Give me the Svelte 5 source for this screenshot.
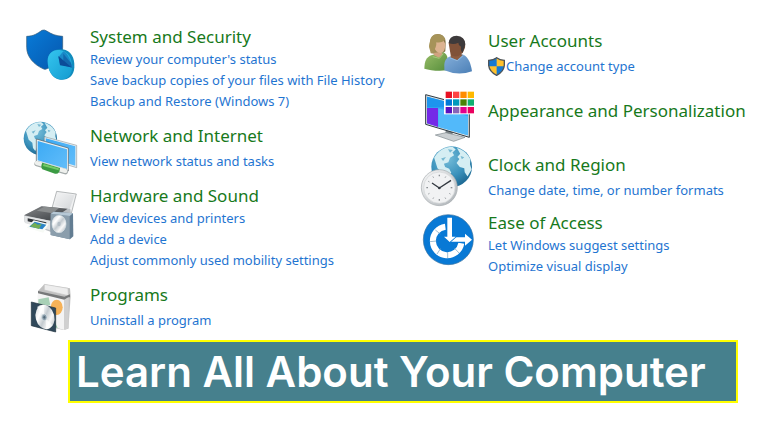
<script>
  const columns = [
    [
      { icon: 'security', view: '21 15 168 168', title: 'System and Security', tall: true, links: ["Review your computer's status", 'Save backup copies of your files with File History', 'Backup and Restore (Windows 7)'] },
      { icon: 'network', view: '21 18 168 168', title: 'Network and Internet', links: ['View network status and tasks'] },
      { icon: 'hardware', view: '21 12 168 168', title: 'Hardware and Sound', tall: true, links: ['View devices and printers', 'Add a device', 'Adjust commonly used mobility settings'] },
      { icon: 'programs', view: '21 15 168 168', title: 'Programs', links: ['Uninstall a program'] }
    ],
    [
      { icon: 'users', view: '15 15 168 168', title: 'User Accounts', shield: true, links: ['Change account type'] },
      { icon: 'appearance', view: '15 9 168 168', title: 'Appearance and Personalization', links: [] },
      { icon: 'clock', view: '15 6 168 168', title: 'Clock and Region', links: ['Change date, time, or number formats'] },
      { icon: 'ease', view: '15 18 168 168', title: 'Ease of Access', tall: true, links: ['Let Windows suggest settings', 'Optimize visual display'] }
    ]
  ];
  const swatches = ['#e81123', '#ff4343', '#ff8c00', '#ffb900', '#0078d7', '#0099bc', '#498205', '#10b070', '#5b0fc0', '#8764b8', '#e3008c', '#ea005e'];
</script>

{#snippet globe(cx, cy, r)}
  <g transform="translate({cx} {cy}) scale({r / 50})">
    <circle r="50" fill="url(#ocean)" />
    <path d="M-43-22C-33-40-16-49 2-49L10-42 2-35 6-28-4-22-8-11-19-7-16 1-6 5-1 15-8 24-15 38-22 29-24 13-35 4-39-9Z" fill="#d5eef3" />
    <path d="M13-46C29-42 40-31 46-18L45-6 49 7 39 24 32 14 31 4 20 1 12-9 19-19 14-24 21-32Z" fill="#d5eef3" />
    <path d="M-9-43 3-41-4-34ZM22-26 31-23 25-18ZM-26-20-14-24-21-14Z" fill="#78b9d2" />
  </g>
{/snippet}

<svg class="defs" aria-hidden="true">
  <defs>
    <linearGradient id="shieldBlue" x2="1" y2="1"><stop stop-color="#087bd8" /><stop offset="1" stop-color="#0657ad" /></linearGradient>
    <linearGradient id="cyan" x2="1" y2="1"><stop stop-color="#35c5ef" /><stop offset="1" stop-color="#139bd0" /></linearGradient>
    <radialGradient id="ocean" cx=".4" cy=".3" r=".75"><stop stop-color="#75bdd9" /><stop offset=".6" stop-color="#3a91bb" /><stop offset="1" stop-color="#1a658f" /></radialGradient>
    <linearGradient id="screen" x2="1" y2="1"><stop stop-color="#3caaf4" /><stop offset="1" stop-color="#62bdfa" /></linearGradient>
    <linearGradient id="silver" x2="1" y2="1"><stop stop-color="#fafafa" /><stop offset="1" stop-color="#a9afb4" /></linearGradient>
    <linearGradient id="disc" x2="1" y2="1"><stop stop-color="#ccd1d3" /><stop offset=".3" stop-color="#fff" /><stop offset=".5" stop-color="#c3cacf" /><stop offset=".7" stop-color="#f8f8f8" /><stop offset="1" stop-color="#a3adb4" /></linearGradient>
    <linearGradient id="dark" x2="1" y2="1"><stop stop-color="#858789" /><stop offset="1" stop-color="#383c40" /></linearGradient>
    <linearGradient id="greenShirt" x2="1" y2="1"><stop stop-color="#9abe69" /><stop offset="1" stop-color="#568e3b" /></linearGradient>
    <linearGradient id="blueShirt" x2="1" y2="1"><stop stop-color="#86b0db" /><stop offset="1" stop-color="#4b7fb6" /></linearGradient>
    <linearGradient id="blond"><stop stop-color="#ad9a62" /><stop offset="1" stop-color="#847446" /></linearGradient>
  </defs>
</svg>

<main>
  <div class="columns">
    {#each columns as column, c}
      <div class="column" class:right={c === 1}>
        {#each column as item}
          <section class:tall={item.tall} class:solo={!item.links.length}>
            <svg class="icon" viewBox={item.view} aria-hidden="true">
              {#if item.icon === 'security'}
                <path d="M35 49C55 49 68 40 81 31Q88 28 95 33C109 42 123 48 143 49V83C143 112 121 136 94 147Q90 149 86 147C56 134 35 110 35 82Z" fill="url(#shieldBlue)" stroke="#345975" stroke-width="2" />
                <path d="M98 123C98 98 118 85 143 88C168 91 180 114 178 142C177 170 156 182 135 179C113 176 98 153 98 123Z" fill="#118cbd" />
                <path d="M98 122C98 100 116 86 138 91C160 96 172 116 171 143C170 168 154 180 136 178C113 175 98 153 98 122Z" fill="url(#cyan)" />
                <path d="M145 94Q160 100 169 132L178 142 136 134 130 112Z" fill="#198ac8" />
                <path d="M145 101 168 129 171 143 145 136Z" fill="#1268ad" />
                <path d="M130 108 169 142 135 136Z" fill="#0b4c98" />
              {:else if item.icon === 'network'}
                {@render globe(76, 73, 50)}
                <path d="M88 68 185 94V161L88 132Z" fill="#e9eef0" stroke="#7a8589" stroke-width="1.5" />
                <path d="M92 73 181 97V155L92 128Z" fill="url(#screen)" />
                <path d="M64 75 160 102V171L64 143Z" fill="#edf2f3" stroke="#4f5b60" stroke-width="2" />
                <path d="M68 81 156 106V165L68 139Z" fill="url(#screen)" />
                <path d="M66 149 151 173" stroke="#a4abab" stroke-width="16" stroke-linecap="round" />
                <path d="M65 147 151 171" stroke="#eef0ed" stroke-width="12" stroke-linecap="round" />
                <path d="M82 146Q76 158 82 166L120 179Q134 182 135 162L92 149Z" fill="#3b9b43" />
                <path d="M86 150 131 163V169L84 156Z" fill="#75cc69" />
              {:else if item.icon === 'hardware'}
                <path d="M125 34 184 42 169 100 111 84Z" fill="#eff0f1" stroke="#969a9c" stroke-width="2" />
                <path d="M128 39 178 46 164 88 119 76Z" fill="url(#silver)" opacity=".4" />
                <path d="M27 107 79 79 166 87 168 103 110 157 29 127Z" fill="#b9bec2" />
                <path d="M27 106 80 79 158 86 105 122Z" fill="url(#dark)" />
                <path d="M65 92 88 80 132 84 113 100Z" fill="#8a8d8e" />
                <path d="M27 107 105 122 105 150 31 130Z" fill="#e3e5e6" />
                <path d="M38 115 94 127V138L38 124Z" fill="#303438" />
                <path d="M56 121 101 132 85 158 35 143Z" fill="#f7faf6" />
                <path d="M59 125 94 134 82 148 43 140Z" fill="#2b84c7" />
                <path d="M45 139 59 128 68 134 80 132 72 147Z" fill="#73ae54" />
                <path d="M107 101 116 95 174 100 175 169 165 178 107 165Z" fill="#637d92" />
                <path d="M107 101 164 108V178L107 165Z" fill="#8b9eac" />
                <path d="M107 101 116 95 174 100 164 108Z" fill="#b6c8d5" />
                <ellipse cx="132" cy="132" rx="21" ry="26" fill="url(#disc)" stroke="#d8e1e6" stroke-width="2" />
                <ellipse cx="132" cy="132" rx="5" ry="7" fill="#b4bec6" />
              {:else if item.icon === 'programs'}
                <path d="M69 51 88 31 165 43 167 67 160 164 145 168 68 150Z" fill="#c1c1c1" />
                <path d="M88 31 159 43 160 65 88 48Z" fill="#ededed" stroke="#c6c6c6" stroke-width="2" />
                <path d="M69 53 148 73V168L69 146Z" fill="#f4f4f4" />
                <path d="M69 51 148 68 165 61V69L148 77 69 58Z" fill="#77797a" />
                <path d="M148 77 161 69V163L148 168Z" fill="#d0d0d0" />
                <path d="M70 76 101 70 106 94 70 92Z" fill="#a8d0b6" />
                <ellipse cx="125" cy="100" rx="18" ry="23" fill="#f6b258" />
                <path d="M106 118 128 162 104 157Z" fill="#94c7a7" />
                <path d="M49 84 122 102V174L49 155Z" fill="#30485a" stroke="#1e303c" stroke-width="2" />
                <ellipse cx="90" cy="129" rx="28" ry="37" fill="url(#disc)" transform="rotate(-14 90 129)" />
                <path d="M88 130 66 99Q76 91 87 93ZM91 132 112 154Q104 166 94 165Z" fill="#fff" opacity=".7" />
                <ellipse cx="88" cy="130" rx="8" ry="10" fill="#8b9eac" stroke="#dee5e9" stroke-width="2" />
                <ellipse cx="88" cy="130" rx="3" ry="4" fill="#536978" />
              {:else if item.icon === 'users'}
                <path d="M47 100C45 83 38 84 45 67C46 51 55 42 68 42C84 42 93 54 92 70L91 94 77 104Z" fill="url(#blond)" />
                <path d="M28 146C29 123 33 111 51 105L83 96Q96 100 98 116L94 151C69 155 44 150 28 146Z" fill="url(#greenShirt)" />
                <path d="M56 99 77 95 83 101 72 113 57 106Z" fill="#d0a27f" />
                <path d="M61 65Q75 67 82 57L91 71Q92 96 77 99Q61 98 57 81Z" fill="#dcb391" />
                <path d="M44 68Q47 42 69 43Q83 43 91 57Q82 70 64 67Q65 82 54 97L45 84Z" fill="#a69359" />
                <path d="M88 142C87 121 94 111 111 108L139 103Q164 107 171 154Q130 169 88 151Z" fill="url(#blueShirt)" />
                <path d="M107 105 134 100 143 105 126 121 107 112Z" fill="#8d5c40" />
                <path d="M101 70C103 57 115 49 129 51C146 52 153 66 150 83L143 99Q125 116 107 105Z" fill="#805239" />
                <path d="M101 69Q102 48 125 47Q150 49 151 73L143 98Q136 93 138 80Q130 77 130 68Q116 75 101 69Z" fill="#3d3a3b" />
                <path d="M105 114 127 122 146 106" fill="none" stroke="#91b9df" stroke-width="3" />
                <path d="M53 110 73 115 85 101" fill="none" stroke="#a8c878" stroke-width="3" />
              {:else if item.icon === 'appearance'}
                <path d="M93 136 114 142 112 154 91 148Z" fill="#7e8589" />
                <path d="M61 153 93 146 150 160 116 172Z" fill="#cbd0d3" stroke="#7c868b" stroke-width="2" />
                <path d="M32 32 163 67V160L32 121Z" fill="#d9e0e4" stroke="#2e3a42" stroke-width="3" />
                <path d="M36 38 159 70V154L36 118Z" fill="#2faaf5" />
                <path d="M36 72 69 72V129L36 118Z" fill="#7429e7" />
                <path d="M36 38 94 53V70H36Z" fill="#1d95ee" />
                <path d="M70 73 159 97V154L70 129Z" fill="#52b9fa" />
                <rect x="87" y="18" width="95" height="73" fill="#fff" />
                {#each swatches as color, i}
                  <rect x={92 + (i % 4) * 22} y={23 + Math.floor(i / 4) * 23} width="19" height="19" fill={color} />
                {/each}
              {:else if item.icon === 'clock'}
                {@render globe(110, 59, 61)}
                <circle cx="73" cy="122" r="54" fill="url(#silver)" stroke="#a5aaad" stroke-width="2" />
                <circle cx="73" cy="122" r="47" fill="#f1f2f3" stroke="#d2d5d7" stroke-width="2" />
                {#each Array(12) as _, i}
                  <path d="M73 83V88" stroke="#8b9094" stroke-width={i % 3 === 0 ? 4 : 2} transform="rotate({i * 30} 73 122)" />
                {/each}
                <path d="M51 108 73 123 108 100" fill="none" stroke="#333940" stroke-width="4" />
                <circle cx="73" cy="123" r="4" fill="#333940" />
              {:else}
                <circle cx="100" cy="104" r="75" fill="#0879d5" stroke="#3b73a0" stroke-width="2" />
                <path d="M91 65A43 43 0 1 0 139 115" fill="none" stroke="#fff" stroke-width="18" />
                <path d="M61 75 76 87M45 110 65 108M66 147 77 130M98 159V141M132 144 118 129" stroke="#6c9bbb" stroke-width="2" />
                <g fill="#fff" stroke="#0879d5" stroke-width="5" paint-order="stroke">
                  <path d="M106 110 118 97H150V86L171 104 150 122V110Z" />
                  <path d="M97 38H111V95H122L104 111 87 95H97Z" />
                </g>
              {/if}
            </svg>
            <div class="text">
              <h2><a href="#{item.icon}">{item.title}</a></h2>
              {#if item.links.length}
                <ul>
                  {#each item.links as link}
                    <li>
                      {#if item.shield}
                        <svg class="uac" viewBox="0 0 51 57" aria-hidden="true">
                          <path d="M26 2Q35 9 49 10V25Q48 44 26 55Q4 44 2 25V10Q17 9 26 2Z" fill="#ffc12d" />
                          <path d="M26 2V28H2V10Q17 9 26 2ZM26 28H49Q47 44 26 55Z" fill="#1679d1" />
                          <path d="M26 2Q35 9 49 10V25Q48 44 26 55Q4 44 2 25V10Q17 9 26 2Z" fill="none" stroke="#4c535a" stroke-width="4" />
                        </svg>
                      {/if}
                      <a href="#{item.icon}">{link}</a>
                    </li>
                  {/each}
                </ul>
              {/if}
            </div>
          </section>
        {/each}
      </div>
    {/each}
  </div>
  <h1>Learn All About Your Computer</h1>
</main>

<style>
  :global(body) { background: #fff; }
  main { padding-top: 25px; font-family: "Noto Sans", "Open Sans", sans-serif; }
  .defs { position: absolute; width: 0; height: 0; }
  .columns { display: grid; grid-template-columns: 398fr 348fr; padding-left: 22px; }
  .column { display: flex; flex-direction: column; gap: 8px; min-width: 0; }
  .right { gap: 6px; }
  section { display: flex; align-items: center; gap: 12px; }
  .tall { align-items: flex-start; }
  .solo h2 { padding-bottom: 8px; }
  .icon { width: 56px; height: 56px; flex: none; overflow: visible; }
  h2 { margin: 0; font-size: 17px; line-height: 24px; font-weight: 400; white-space: nowrap; }
  h2 a { color: #17791b; }
  a { color: #1f75d1; text-decoration: none; }
  a:hover { text-decoration: underline; }
  ul { list-style: none; margin: 0; padding: 3px 0 0; }
  .tall ul { padding-top: 0; }
  li { display: flex; align-items: center; font-size: 13px; line-height: 21px; white-space: nowrap; }
  .uac { width: 17px; height: 19px; margin-right: 1px; }
  h1 { margin: 5px 30px 0 68px; padding-left: 6px; border: 2px solid #ff0; background: #46808d; color: #fff; font: 600 42px/59px Inter, sans-serif; white-space: nowrap; }
</style>
